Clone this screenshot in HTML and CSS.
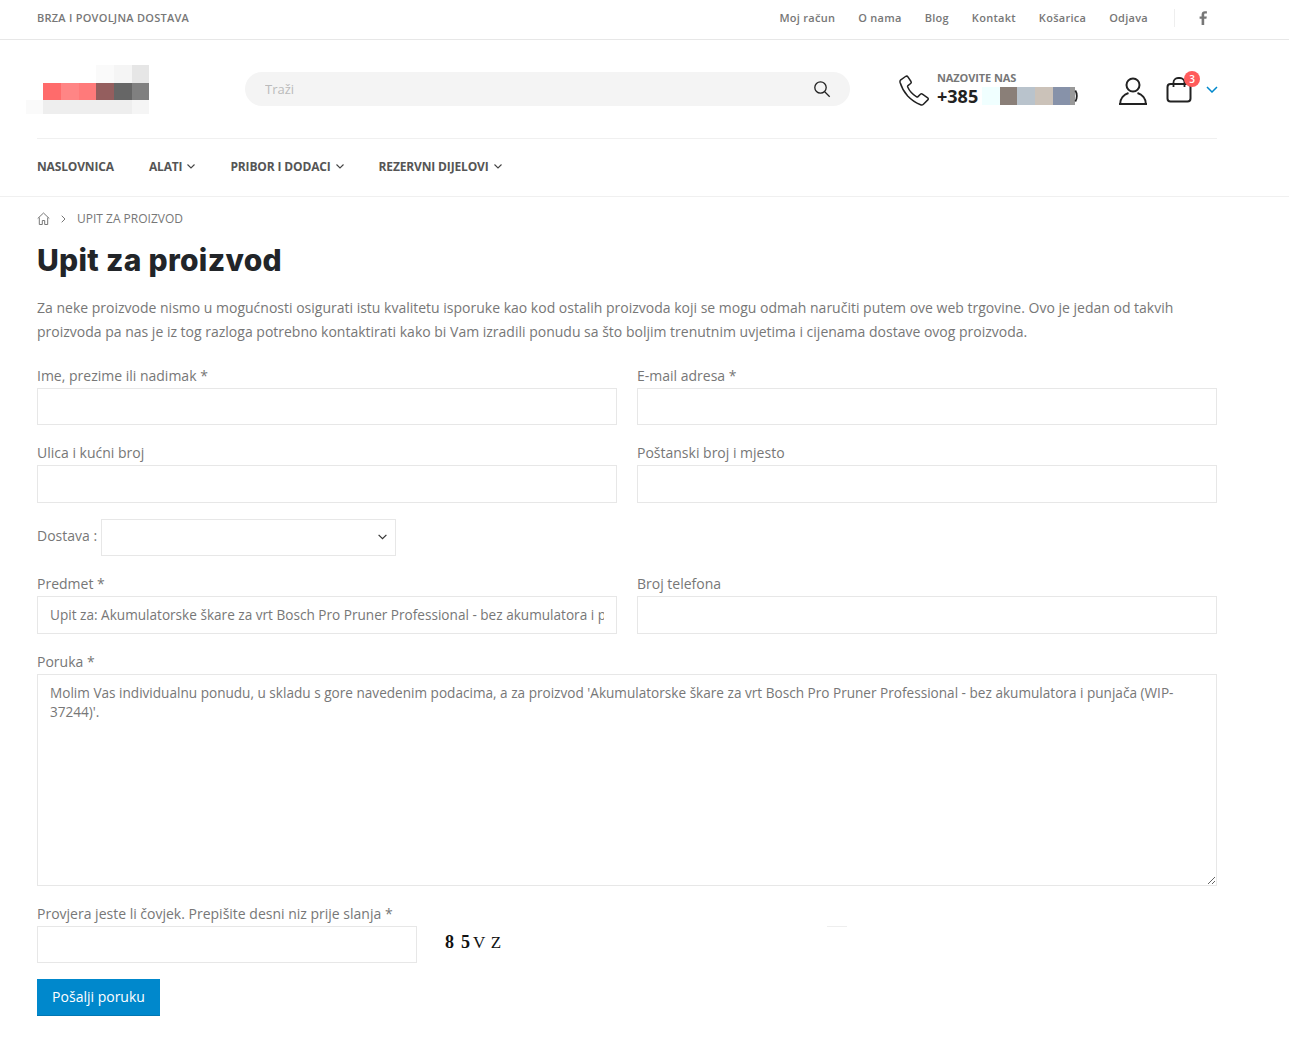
FILE: index.html
```html
<!DOCTYPE html>
<html lang="hr">
<head>
<meta charset="utf-8">
<title>Upit za proizvod</title>
<link rel="stylesheet" href="styles.css">
</head>
<body>
<div class="topbar">
  <div class="wrap topbar-in">
    <span class="promo">BRZA I POVOLJNA DOSTAVA</span>
    <nav class="toplinks">
      <a>Moj račun</a><a>O nama</a><a>Blog</a><a>Kontakt</a><a>Košarica</a><a>Odjava</a>
    </nav>
    <span class="social">
      <svg width="9" height="14" viewBox="0 0 9 14"><path fill="#777" d="M2.6 14V7.8H.6V5.4h2V3.6C2.600 1.300 3.900.2 5.900.2c.9 0 1.700.1 2 .1v2.200H6.500c-1.100 0-1.300.5-1.300 1.300v1.600h2.600l-.4 2.400H5.200V14z"/></svg>
    </span>
  </div>
</div>

<div class="wrap">
  <header class="mainhead">
    <svg class="logo" width="123" height="49" viewBox="0 0 123 49" shape-rendering="crispEdges">
      <rect x="70" y="0" width="18" height="18" fill="#fafafa"/><rect x="88" y="0" width="18" height="18" fill="#f5f5f5"/><rect x="106" y="0" width="17" height="18" fill="#e6e6e6"/>
      <rect x="17" y="18" width="18" height="17" fill="#ff6b6b"/><rect x="35" y="18" width="18" height="17" fill="#ff8585"/><rect x="53" y="18" width="17" height="17" fill="#ff7a7a"/><rect x="70" y="18" width="18" height="17" fill="#945e5e"/><rect x="88" y="18" width="18" height="17" fill="#666"/><rect x="106" y="18" width="17" height="17" fill="#808080"/>
      <rect x="0" y="35" width="17" height="14" fill="#fafafa"/><rect x="17" y="35" width="89" height="14" fill="#eee"/><rect x="106" y="35" width="17" height="14" fill="#f5f5f5"/>
    </svg>
    <form class="search">
      <input class="search-input" type="text" placeholder="Traži">
      <svg class="search-icon" width="18" height="18" viewBox="0 0 18 18" fill="none" stroke="#222" stroke-width="1.300"><circle cx="7.500" cy="7.500" r="5.700"/><path d="M11.700 11.700l5 5"/></svg>
    </form>
    <div class="phone">
      <svg class="phone-icon" width="31" height="31" viewBox="0 0 31 31" fill="none" stroke="#222" stroke-width="1.500" stroke-linejoin="round"><path d="M6.500 1.500 1.800 4.800c-.8.700-1 1.600-.7 2.700 1.500 5 4 9.500 7.600 13.600 3.600 3.900 8 6.800 12.900 8.700 1 .4 2 .2 2.800-.6l4.400-4.300c.7-.7.600-1.500-.1-2.100l-5.300-3.700c-.7-.5-1.400-.4-2 .2l-2.400 2.300c-.4.400-.9.400-1.400.2-2-1.100-3.800-2.500-5.300-4.200-1.500-1.700-2.700-3.500-3.600-5.600-.2-.5-.1-1 .3-1.400l2.600-2.100c.6-.5.800-1.300.4-2L9.100 2.100c-.6-.9-1.700-1.200-2.600-.6z"/></svg>
      <div class="phone-text">
        <div class="phone-label">NAZOVITE NAS</div>
        <div class="phone-num">+385
          <svg class="phone-blur" width="97" height="18" viewBox="0 0 97 18" shape-rendering="crispEdges"><rect x="0" width="18" height="18" fill="#f0ffff"/><rect x="18" width="17" height="18" fill="#8a7f78"/><rect x="35" width="18" height="18" fill="#b9c3cc"/><rect x="53" width="18" height="18" fill="#cbc2b9"/><rect x="71" width="17" height="18" fill="#8792a9"/><rect x="88" width="5" height="18" fill="#999"/><path class="blur-edge" d="M93.500 3.500c2 3 2 8 0 11" fill="none" stroke="#222" stroke-width="1.800"/></svg>
        </div>
      </div>
    </div>
    <svg class="user-icon" width="28" height="28" viewBox="0 0 28 28" fill="none" stroke="#222" stroke-width="2"><circle cx="14" cy="8" r="6.500"/><path d="M1.200 27c0-5.500 3.800-9.500 8.300-11M26.800 27c0-5.500-3.800-9.500-8.300-11M0 27h28"/></svg>
    <div class="cart">
      <svg width="26" height="26" viewBox="0 0 26 26" fill="none" stroke="#222" stroke-width="2"><rect x="1.500" y="7" width="23" height="17.500" rx="3"/><path d="M7.500 10V5.500C7.500 3 9.500 1 12 1h2c2.500 0 4.500 2 4.500 4.500V10" stroke-width="1.800"/></svg>
      <span class="badge">3</span>
    </div>
    <svg class="cart-arrow" width="12" height="7" viewBox="0 0 12 7" fill="none" stroke="#0088cc" stroke-width="1.500"><path d="M1 1l5 5 5-5"/></svg>
  </header>

  <nav class="mainnav">
    <a>NASLOVNICA</a>
    <a>ALATI<svg class="caret" width="8" height="5" viewBox="0 0 8 5"><path d="M.5.500l3.500 3.500L7.500.5" fill="none" stroke="#444" stroke-width="1.100"/></svg></a>
    <a>PRIBOR I DODACI<svg class="caret" width="8" height="5" viewBox="0 0 8 5"><path d="M.5.500l3.500 3.500L7.500.5" fill="none" stroke="#444" stroke-width="1.100"/></svg></a>
    <a>REZERVNI DIJELOVI<svg class="caret" width="8" height="5" viewBox="0 0 8 5"><path d="M.5.500l3.500 3.500L7.500.5" fill="none" stroke="#444" stroke-width="1.100"/></svg></a>
  </nav>
</div>

<main class="content">
  <div class="wrap">
    <div class="crumbs">
      <svg width="13" height="13" viewBox="0 0 13 13" fill="none" stroke="#777" stroke-width="1"><path d="M.7 6.500 6.500 1l5.800 5.500M2.300 5.500v7h3V8.500h2.400v4h3v-7"/></svg>
      <svg class="crumb-sep" width="5" height="8" viewBox="0 0 5 8"><path d="M.7.700 4 4 .7 7.300" fill="none" stroke="#777" stroke-width="1"/></svg>
      <span>UPIT ZA PROIZVOD</span>
    </div>
    <h1 class="title">Upit za proizvod</h1>
    <p class="intro">Za neke proizvode nismo u mogućnosti osigurati istu kvalitetu isporuke kao kod ostalih proizvoda koji se mogu odmah naručiti putem ove web trgovine. Ovo je jedan od takvih proizvoda pa nas je iz tog razloga potrebno kontaktirati kako bi Vam izradili ponudu sa što boljim trenutnim uvjetima i cijenama dostave ovog proizvoda.</p>

    <form class="form">
      <div class="row">
        <label class="field"><span class="lab">Ime, prezime ili nadimak *</span><input class="box" type="text"></label>
        <label class="field"><span class="lab">E-mail adresa *</span><input class="box" type="text"></label>
      </div>
      <div class="row row-next">
        <label class="field"><span class="lab">Ulica i kućni broj</span><input class="box tall" type="text"></label>
        <label class="field"><span class="lab">Poštanski broj i mjesto</span><input class="box tall" type="text"></label>
      </div>
      <div class="delivery">
        <span class="lab-inline">Dostava :</span>
        <span class="select-wrap">
          <select class="select"><option></option></select>
          <svg class="select-arrow" width="9" height="6" viewBox="0 0 9 6"><path d="M.6.800 4.500 4.700 8.400.8" fill="none" stroke="#333" stroke-width="1.200"/></svg>
        </span>
      </div>
      <div class="row row-next">
        <label class="field"><span class="lab">Predmet *</span><input class="box tall" type="text" value="Upit za: Akumulatorske škare za vrt Bosch Pro Pruner Professional - bez akumulatora i punjača (WIP-37244)"></label>
        <label class="field"><span class="lab">Broj telefona</span><input class="box tall" type="text"></label>
      </div>
      <label class="field row-next"><span class="lab">Poruka *</span><textarea class="area">Molim Vas individualnu ponudu, u skladu s gore navedenim podacima, a za proizvod 'Akumulatorske škare za vrt Bosch Pro Pruner Professional - bez akumulatora i punjača (WIP-37244)'.</textarea></label>
      <div class="row-next">
        <span class="lab">Provjera jeste li čovjek. Prepišite desni niz prije slanja *</span>
        <div class="captcha-row">
          <input class="box captcha-input" type="text">
          <span class="captcha-code"><span class="cc-bold">8</span><span class="cc-bold cc-5">5</span><span class="cc-v">V</span><span class="cc-z">Z</span></span>
          <span class="tick"></span>
        </div>
      </div>
      <button class="send" type="button">Pošalji poruku</button>
    </form>
  </div>
</main>
</body>
</html>
```
FILE: styles.css
```css
* { box-sizing: border-box; }
html, body { margin: 0; padding: 0; }
body { font-family: "Open Sans", "Liberation Sans", sans-serif; font-size: 14px; color: #777; background: #fff; }
.wrap { width: 1180px; margin-left: 37px; }

.topbar { height: 40px; border-bottom: 1px solid #e7e7e7; }
.topbar-in { display: flex; align-items: center; height: 35px; }
.promo { font-size: 11px; font-weight: 600; letter-spacing: .25px; color: #777; }
.toplinks { margin-left: auto; display: flex; gap: 23px; font-size: 11px; font-weight: 600; letter-spacing: .27px; color: #777; }
.social { margin-left: 26px; width: 43px; height: 18px; border-left: 1px solid #eee; display: flex; align-items: center; padding-left: 24px; }

.mainhead { height: 99px; border-bottom: 1px solid #f0f0f0; display: flex; align-items: flex-start; position: relative; }
.logo { margin: 25px 0 0 -11px; flex: none; }
.search { margin: 32px 0 0 96px; width: 605px; height: 34px; border-radius: 17px; background: #f4f4f4; display: flex; align-items: center; padding: 0 19px 0 20px; flex: none; }
.search-input { flex: 1; border: 0; background: transparent; outline: 0; font: 13px "Open Sans", sans-serif; color: #777; padding: 0; }
.search-input::placeholder { color: #bbb; opacity: 1; }
.search-icon { flex: none; }
.phone { margin: 34px 0 0 49px; display: flex; align-items: flex-start; flex: none; }
.phone-icon { margin: 1px 7px 0 0; }
.phone-text { width: 142px; }
.phone-label { font-size: 11px; font-weight: 700; letter-spacing: -.1px; line-height: 13px; margin-top: -3px; color: #777; }
.phone-num { font-size: 18px; font-weight: 700; color: #222; line-height: 22px; display: flex; align-items: center; gap: 4px; white-space: nowrap; margin-top: 1px; }
.blur-edge { shape-rendering: auto; }
.user-icon { margin: 37px 0 0 40px; flex: none; }
.cart { position: relative; margin: 37px 0 0 19px; width: 26px; height: 26px; flex: none; }
.badge { position: absolute; top: -6px; right: -8px; width: 16px; height: 16px; border-radius: 50%; background: #ff5b5b; color: #fff; font-size: 10px; font-weight: 600; line-height: 16px; text-align: center; }
.cart-arrow { margin: 46px 0 0 14px; flex: none; }

.mainnav { height: 57px; padding-bottom: 2px; display: flex; align-items: center; gap: 35px; font-size: 12px; font-weight: 700; letter-spacing: -.15px; color: #555; }
.mainnav a { display: flex; align-items: center; }
.caret { margin-left: 5px; }

.content { border-top: 1px solid #f0f0f0; }
.crumbs { height: 43px; display: flex; align-items: center; font-size: 12px; color: #777; }
.crumb-sep { margin: 0 11px 0 11px; }
.title { margin: 1px 0 0; height: 39px; font-family: "Inter", "Open Sans", sans-serif; font-size: 30px; font-weight: 800; line-height: 39px; color: #222529; letter-spacing: .3px; }
.intro { margin: 16px 0 0; line-height: 24px; }

.form { margin-top: 22px; }
.row { display: grid; grid-template-columns: 580px 580px; gap: 20px; }
.row-next { display: block; margin-top: 18px; }
.row.row-next { display: grid; }
.field { display: block; }
.lab { display: block; line-height: 19px; margin-bottom: 3px; }
.box { display: block; width: 100%; height: 37px; border: 1px solid #e7e7e7; background: #fff; padding: 0 12px 2px; font: 13.6px "Open Sans", sans-serif; color: #777; outline: 0; border-radius: 0; }
.tall { height: 38px; }
.delivery { margin-top: 16px; display: flex; align-items: center; height: 37px; gap: 4px; }
.lab-inline { line-height: 19px; margin-bottom: 5px; }
.select-wrap { position: relative; display: block; width: 295px; height: 37px; }
.select { display: block; width: 100%; height: 100%; appearance: none; -webkit-appearance: none; border: 1px solid #e7e7e7; background: #fff; border-radius: 0; outline: 0; }
.select-arrow { position: absolute; right: 9px; top: 15px; pointer-events: none; }
.area { display: block; width: 100%; height: 212px; border: 1px solid #e7e7e7; padding: 8px 12px; font: 13.6px/19px "Open Sans", sans-serif; color: #777; outline: 0; border-radius: 0; resize: vertical; }
.captcha-row { display: flex; align-items: flex-start; position: relative; }
.captcha-input { width: 380px; flex: none; }
.captcha-code { margin: 6px 0 0 28px; display: flex; align-items: baseline; font: 17px/20px "Liberation Serif", serif; color: #111; }
.cc-bold { font-size: 18px; font-weight: 700; }
.cc-5 { margin-left: 7px; }
.cc-v { margin-left: 3px; }
.cc-z { margin-left: 5.5px; }
.tick { position: absolute; left: 790px; top: 0; width: 20px; height: 1px; background: #eee; }
.send { display: block; margin-top: 16px; width: 123px; height: 37px; border: 0; border-bottom: 1px solid #0077b3; background: #08c; color: #fff; font: 14px "Open Sans", sans-serif; padding: 0 0 2px; }
```
